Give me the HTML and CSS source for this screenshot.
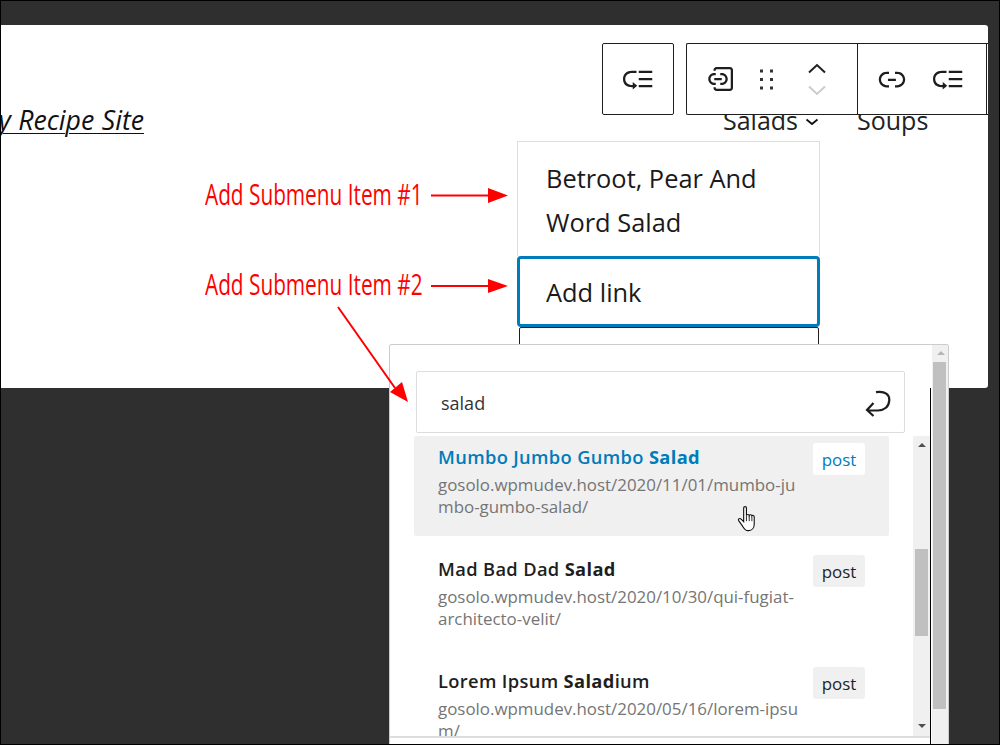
FILE: index.html
```html
<!DOCTYPE html>
<html lang="en">
<head>
<meta charset="utf-8">
<title>Add Submenu Item</title>
<link rel="stylesheet" href="styles.css">
</head>
<body>
<div class="page">
  <main class="canvas">
    <header class="site-header">
      <div class="site-title"><a>My Recipe Site</a></div>
      <nav class="nav">
        <span class="nav-item">Salads<svg class="nav-chev" viewBox="0 0 14 8"><path d="M1.5 1.5 7 6l5.5-4.5" fill="none" stroke="#111" stroke-width="1.8"/></svg></span>
        <span class="nav-item">Soups</span>
      </nav>
    </header>
    <ul class="submenu">
      <li class="sub-item">Betroot, Pear And Word Salad</li>
      <li class="sub-item sub-active">Add link</li>
      <li class="sub-next"></li>
    </ul>
    <div class="toolbar-row">
      <div class="tb tb-one">
        <button class="tb-btn"><svg class="ic" viewBox="0 0 24 24"><path d="M2 12c0 3.600 2.400 5.500 6 5.500h.5V19l3-2.500-3-2.500v2H8c-2.500 0-4.500-1.500-4.500-4S5.500 8 8 8h3V6.500H8c-3.600 0-6 2.300-6 5.500zm10.500-5.500v1.500h9V6.500h-9zm0 6.300h9v-1.500h-9v1.500zm0 4.700h9V16h-9v1.500z"/></svg></button>
      </div>
      <div class="tb tb-two">
        <button class="tb-btn tb-w1"><svg class="ic" viewBox="0 0 24 24"><path d="M12.500 14.500h-1V16h1c2.200 0 4-1.800 4-4s-1.800-4-4-4h-1v1.500h1c1.400 0 2.500 1.100 2.500 2.500s-1.100 2.500-2.500 2.500zm-4 1.500v-1.500h-1C6.100 14.500 5 13.400 5 12s1.100-2.500 2.500-2.500h1V8h-1c-2.200 0-4 1.800-4 4s1.800 4 4 4h1zm-1-3.200h5v-1.500h-5v1.500zM18 4H9c-1.100 0-2 .9-2 2v.5h1.500V6c0-.3.2-.5.5-.5h9c.3 0 .5.2.5.5v12c0 .3-.2.5-.5.5H9c-.3 0-.5-.2-.5-.5v-.5H7v.5c0 1.100.9 2 2 2h9c1.100 0 2-.9 2-2V6c0-1.100-.9-2-2-2z"/></svg></button>
        <button class="tb-btn tb-w2"><svg class="ic-drag" viewBox="0 0 13 21"><path d="M0 .5h3v3H0zM10 .5h3v3h-3zM0 9h3v3H0zM10 9h3v3h-3zM0 17.500h3v3H0zM10 17.500h3v3h-3z"/></svg></button>
        <div class="mover">
          <svg class="chev" viewBox="0 0 20 12"><path d="M2 10.500 10 3l8 7.500" fill="none" stroke="#1e1e1e" stroke-width="2"/></svg>
          <svg class="chev" viewBox="0 0 20 12"><path d="M2 1.500 10 9l8-7.500" fill="none" stroke="#ccc" stroke-width="2"/></svg>
        </div>
      </div>
      <div class="tb tb-three">
        <button class="tb-btn tb-w3"><svg class="ic" viewBox="0 0 24 24"><path d="M15.600 7.200H14v1.500h1.600c2 0 3.700 1.700 3.700 3.700s-1.700 3.700-3.700 3.700H14v1.500h1.600c2.800 0 5.200-2.300 5.200-5.200 0-2.900-2.300-5.200-5.200-5.200zM4.700 12.400c0-2 1.700-3.700 3.700-3.700H10V7.200H8.400c-2.900 0-5.200 2.300-5.200 5.200 0 2.900 2.300 5.200 5.200 5.200H10v-1.500H8.400c-2 0-3.700-1.700-3.700-3.700zm4.600.9h5.300v-1.500H9.300v1.500z"/></svg></button>
        <button class="tb-btn tb-w3"><svg class="ic" viewBox="0 0 24 24"><path d="M2 12c0 3.600 2.400 5.500 6 5.500h.5V19l3-2.500-3-2.500v2H8c-2.500 0-4.500-1.500-4.500-4S5.500 8 8 8h3V6.500H8c-3.600 0-6 2.300-6 5.500zm10.500-5.500v1.500h9V6.500h-9zm0 6.300h9v-1.500h-9v1.500zm0 4.700h9V16h-9v1.500z"/></svg></button>
      </div>
      <div class="tb tb-four"></div>
    </div>
  </main>

  <section class="popover">
    <div class="pop-main">
      <div class="search">
        <span class="search-text">salad</span>
        <svg class="enter" viewBox="0 0 26 28"><path d="M11 2.200C20 .5 25 5 24.200 11 23.500 17 19 20.500 13 20.500H2.500M8.500 13 2 20l6.500 6" fill="none" stroke="#1e1e1e" stroke-width="2.200"/></svg>
      </div>
      <div class="results">
        <div class="result-list">
          <article class="result result-hover">
            <div class="result-text">
              <div class="result-title">Mumbo Jumbo Gumbo <b>Salad</b></div>
              <div class="result-url">gosolo.wpmudev.host/2020/11/01/mumbo-jumbo-gumbo-salad/</div>
            </div>
            <span class="badge">post</span>
          </article>
          <article class="result">
            <div class="result-text">
              <div class="result-title">Mad Bad Dad <b>Salad</b></div>
              <div class="result-url">gosolo.wpmudev.host/2020/10/30/qui-fugiat-architecto-velit/</div>
            </div>
            <span class="badge">post</span>
          </article>
          <article class="result">
            <div class="result-text">
              <div class="result-title">Lorem Ipsum <b>Salad</b>ium</div>
              <div class="result-url">gosolo.wpmudev.host/2020/05/16/lorem-ipsum/</div>
            </div>
            <span class="badge">post</span>
          </article>
        </div>
        <div class="inner-scroll">
          <span class="arrow-up dark"></span>
          <span class="inner-thumb"></span>
          <span class="arrow-down dark"></span>
        </div>
      </div>
    </div>
    <div class="outer-scroll">
      <span class="arrow-up"></span>
      <span class="outer-thumb"></span>
    </div>
    <span class="rule-line"></span>
  </section>

  <svg class="pointer" viewBox="0 0 18 26"><path d="M6 2.500c0-1.500 2.500-1.500 2.500 0v7c.3-1.300 2.300-1.300 2.500 0 .4-1 2.200-1 2.400.3.500-.8 2-.6 2.100.7v6.500c0 3.500-2 6-5 6H10c-2.500 0-3.500-1.500-5-4L1.500 14c-.8-1.500 1-2.600 2.200-1.300L6 15V2.500z" fill="#fff" stroke="#111" stroke-width="1"/><path d="M8.500 9.500v5M11 10v4.500M13.400 10.500v4" fill="none" stroke="#111" stroke-width=".8"/></svg>

  <div class="note note-one">Add Submenu Item #1</div>
  <div class="note note-two">Add Submenu Item #2</div>
  <svg class="arrows" viewBox="0 0 998 743">
    <path d="M430 194.500h60M430 285h60M337 306l57 81" fill="none" stroke="#f00" stroke-width="2"/>
    <path d="M487 187l20 7.500-20 7.500zM487 278l20 7-20 7zM407 401l-18-10 12-10z" fill="#f00"/>
  </svg>
</div>
</body>
</html>
```
FILE: styles.css
```css
* { box-sizing: border-box; }
html, body { margin: 0; padding: 0; }
body { font-family: "Open Sans", "Noto Sans", sans-serif; color: #1e1e1e; }
.page {
  position: relative;
  width: 1000px;
  height: 745px;
  border: 1px solid #000;
  background: #2f2f2f;
  padding-top: 24px;
  overflow: hidden;
}
.canvas {
  position: relative;
  width: 987px;
  height: 363px;
  background: #fff;
  border-radius: 0 3px 3px 0;
  overflow: hidden;
}
.site-header { display: flex; align-items: center; padding-top: 74px; height: 115px; }
.site-title {
  width: 143px;
  margin-top: 1px;
  display: flex;
  justify-content: flex-end;
  overflow: hidden;
  white-space: nowrap;
  font-size: 26.700px;
  word-spacing: .5px;
  font-style: italic;
  line-height: 36px;
  color: #111;
}
.site-title a { text-decoration: underline; text-underline-offset: 3px; text-decoration-thickness: 1px; }
.nav { display: flex; margin-left: 579px; font-size: 25px; line-height: 34px; color: #222; }
.nav-item { display: flex; align-items: center; }
.nav-item + .nav-item { margin-left: 38px; }
.nav-chev { width: 14px; height: 8px; margin-left: 7px; margin-top: 4px; }
.submenu { list-style: none; margin: 1px 0 0 516px; padding: 0; width: 303px; font-size: 25.400px; line-height: 44px; color: #1a1a1a; }
.sub-item { padding: 14px 28px 12px; border: 1px solid #ddd; border-bottom: 0; }
.sub-active { height: 71px; padding: 11px 26px 0; border: 3px solid #007cba; border-radius: 4px; }
.sub-next { height: 40px; margin: 0 1px 0 2px; border: 1px solid #1e1e1e; border-radius: 2px; }

.toolbar-row { position: absolute; left: 601px; top: 18px; display: flex; height: 72px; }
.tb { display: flex; height: 72px; background: #fff; border: 1px solid #1e1e1e; align-items: center; }
.tb-one { width: 72px; border-radius: 2px; margin-right: 12px; }
.tb-two { width: 171px; border-radius: 2px 0 0 2px; border-right: 0; padding-left: 3px; }
.tb-three { width: 129px; border-right: 0; padding-left: 6px; }
.tb-four { width: 40px; border-right: 0; }
.tb-btn { display: flex; align-items: center; justify-content: center; padding: 0; height: 70px; border: 0; background: none; }
.tb-one .tb-btn { width: 70px; }
.tb-w1 { width: 62px; }
.tb-w2 { width: 30px; margin-left: -1px; }
.tb-w3 { width: 56px; }
.ic { width: 36px; height: 36px; fill: #1e1e1e; display: block; flex: none; }
.ic-drag { width: 13px; height: 21px; fill: #333; display: block; }
.mover { display: flex; flex-direction: column; gap: 11px; margin-left: 26px; }
.chev { width: 20px; height: 12px; display: block; }

.popover {
  position: absolute;
  left: 388px;
  top: 343px;
  width: 560px;
  height: 420px;
  display: flex;
  background: #fff;
  border: 1px solid #ccc;
  border-radius: 2px 2px 0 0;
}
.pop-main { width: 542px; }
.search {
  display: flex;
  align-items: center;
  justify-content: space-between;
  width: 489px;
  height: 62px;
  margin: 26px 0 3px 26px;
  padding: 0 13px 0 24px;
  border: 1px solid #ddd;
  border-radius: 2px;
  font-size: 18px;
  color: #333;
}
.search-text { margin-top: 2px; }
.enter { width: 26px; height: 28px; margin-top: 4px; }
.results { display: flex; height: 302px; border-bottom: 2px solid #ddd; margin-right: 2px; overflow: hidden; }
.result-list { width: 523px; padding-left: 24px; }
.result {
  display: flex;
  justify-content: space-between;
  align-items: flex-start;
  height: 100px;
  width: 475px;
  margin-bottom: 12px;
  padding: 8px 24px 0 24px;
  border-radius: 2px;
}
.result-hover { background: #f0f0f0; }
.result-hover .result-title { color: #007cba; }
.result-hover .result-title b { color: #007cba; }
.result-hover .badge { background: #fff; color: #007cba; }
.result-text { width: 361px; }
.result-title { font-size: 18.300px; letter-spacing: .35px; line-height: 26px; font-weight: 600; color: #1e1e1e; white-space: nowrap; }
.result-title b { font-weight: 700; }
.result-url { font-size: 16.900px; line-height: 22px; color: #757575; word-break: break-all; margin-top: 4px; }
.badge {
  width: 52px;
  height: 32px;
  margin-top: -1px;
  background: #f0f0f0;
  border-radius: 3px;
  font-size: 16.900px;
  line-height: 33px;
  text-align: center;
  color: #1e1e1e;
}
.inner-scroll { position: relative; width: 17px; background: #f0f0f0; }
.outer-scroll { position: relative; width: 16px; margin-left: 0; background: #f0f0f0; }
.inner-thumb { position: absolute; left: 2px; top: 113px; width: 13px; height: 87px; background: #c0c0c0; }
.outer-thumb { position: absolute; left: 1px; top: 17px; width: 13px; height: 347px; background: #c0c0c0; }
.arrow-up, .arrow-down { position: absolute; left: 5px; width: 0; height: 0; border-left: 4px solid transparent; border-right: 4px solid transparent; }
.arrow-up { top: 6px; border-bottom: 4px solid #b5b5b5; }
.arrow-down { bottom: 8px; border-top: 4px solid #505050; }
.arrow-up.dark { top: 7px; border-bottom-color: #505050; }
.rule-line { position: absolute; left: 540px; top: 43px; bottom: 0; width: 1px; background: #000; }

.pointer { position: absolute; left: 736px; top: 504px; width: 20px; height: 29px; }
.note {
  position: absolute;
  left: 204px;
  color: #f00;
  font-size: 30px;
  line-height: 34px;
  white-space: nowrap;
  transform: scaleX(.693);
  transform-origin: left center;
}
.note-one { top: 176px; }
.note-two { top: 266px; }
.arrows { position: absolute; left: 0; top: 0; width: 998px; height: 743px; pointer-events: none; }
```
